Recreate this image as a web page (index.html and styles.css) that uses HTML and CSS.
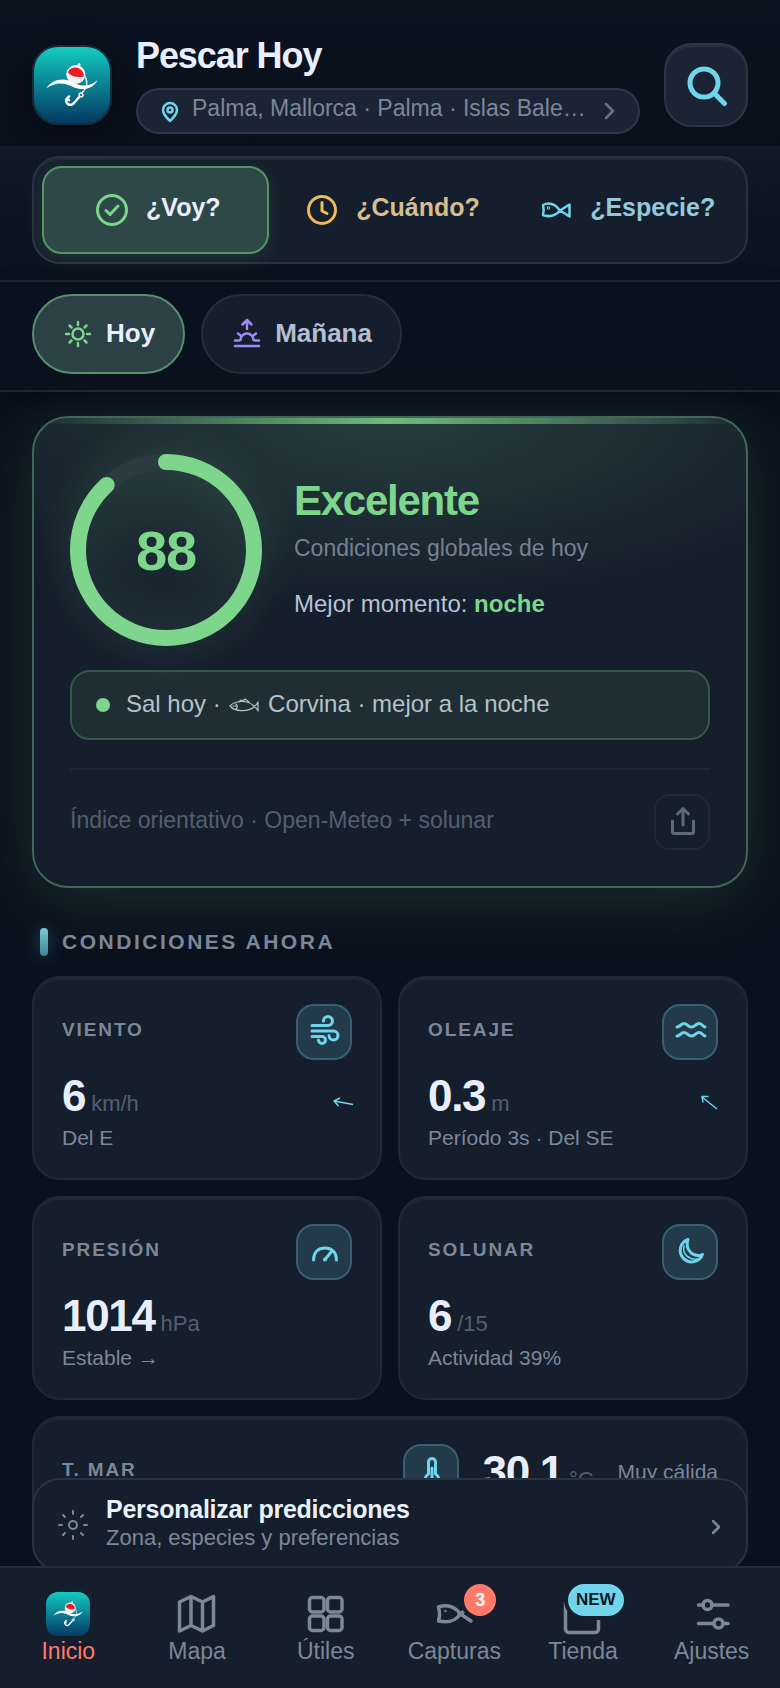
FILE: index.html
```html
<!DOCTYPE html>
<html lang="es">
<head>
    <meta charset="UTF-8">
    <meta name="viewport" content="width=device-width, initial-scale=1.0">
    <title>Pescar Hoy</title>
    <link rel="stylesheet" href="styles.css">
</head>
<body>
    <!-- Shared app logo -->
    <svg class="defs" width="0" height="0" aria-hidden="true">
        <defs>
            <linearGradient id="sea" x1="0" y1="0" x2="0" y2="1">
                <stop offset="0" stop-color="#14ccc0"/>
                <stop offset="0.5" stop-color="#0b8093"/>
                <stop offset="1" stop-color="#053a63"/>
            </linearGradient>
        </defs>
        <symbol id="logo" viewBox="0 0 80 80">
            <rect width="80" height="80" fill="url(#sea)"/>
            <path d="M47.500 18.500l-1 5" stroke="#f4f4f6" stroke-width="3" stroke-linecap="round"/>
            <circle cx="44" cy="29" r="10" fill="#f1f2f5"/>
            <path d="M35.500 26.500a9 9 0 0 1 17 4.500c-6 1.500-13 .5-17-4.500z" fill="#ee1c25"/>
            <path d="M53 30c4 6 4 12-3 19" fill="none" stroke="#dfe7ee" stroke-width="1.500"/>
            <path d="M13 43.500c6-9 17-12 28-6.500 9 5 17 5 26-2-5 9-15 12-27 6.500-9-4.500-18-4.500-27 2z" fill="#fff"/>
            <circle cx="49.500" cy="50.500" r="2" fill="none" stroke="#fff" stroke-width="1.500"/>
            <path d="M48 52l-6 7c-4 4-9 1-8-4l3-3M34 55l3 1" fill="none" stroke="#fff" stroke-width="2.500" stroke-linecap="round"/>
        </symbol>
    </svg>

    <header class="header">
        <svg class="brand-logo"><use href="#logo"/></svg>
        <div class="brand">
            <h1>Pescar Hoy</h1>
            <button class="location" type="button">
                <svg width="20" height="24" viewBox="0 0 20 24" stroke-width="2.500"><path d="M10 22c-4-4-7-7-7-11a7 7 0 0 1 14 0c0 4-3 7-7 11z"/><circle cx="10" cy="11" r="2.500"/></svg>
                <span class="location-name">Palma, Mallorca · Palma · Islas Baleares, España</span>
                <svg class="chevron" width="16" height="20" viewBox="0 0 16 20" stroke-width="2.500"><path d="M6 3l7 7-7 7"/></svg>
            </button>
        </div>
        <button class="search" type="button" aria-label="Buscar">
            <svg width="80" height="80" viewBox="2 2 80 80" stroke-width="5"><circle cx="40" cy="40" r="14"/><path d="M50.500 50.500l10 10"/></svg>
        </button>
    </header>

    <div class="tabs-bar">
        <div class="tabs">
            <button class="tab active" type="button">
                <svg width="44" height="44" viewBox="0 0 44 44" stroke-width="3"><circle cx="22" cy="22" r="14.500"/><path d="M16 22.500l4 4 8-8.500"/></svg>
                <span>¿Voy?</span>
            </button>
            <button class="tab when" type="button">
                <svg width="44" height="44" viewBox="0 0 44 44" stroke-width="3"><circle cx="22" cy="22" r="13.500"/><path d="M22 14.500v8.500l5 2.500"/></svg>
                <span>¿Cuándo?</span>
            </button>
            <button class="tab species" type="button">
                <svg width="44" height="44" viewBox="0 0 44 44" stroke-width="2.500"><path d="M9 17c7-3.500 12-1 17 5.500-5 6-10 7-17 4.500 1-3.500 1-6.500 0-10zM26 22.500l9.500-6v12z"/><circle cx="14.500" cy="20" r=".5"/></svg>
                <span>¿Especie?</span>
            </button>
        </div>
    </div>

    <div class="days-bar">
        <button class="day active" type="button">
            <svg width="32" height="32" viewBox="0 0 32 32" stroke-width="2.500"><circle cx="16" cy="16" r="5.500"/><path d="M16 4v3M16 25v3M4 16h3M25 16h3M7.500 7.500l2 2M22.500 22.500l2 2M7.500 24.500l2-2M22.500 9.500l2-2"/></svg>
            <span>Hoy</span>
        </button>
        <button class="day" type="button">
            <svg width="32" height="32" viewBox="0 0 32 32" stroke-width="2.500"><path d="M16 11V2.500M11.500 6.500L16 2l4.500 4.500M9.500 22a6.500 6.500 0 0 1 13 0M4 22.500h4M24 22.500h4M4 28h24M7 15.500l2 1.500M25 15.500l-2 1.500"/></svg>
            <span>Mañana</span>
        </button>
    </div>

    <main>
        <section class="score-card">
            <div class="score-top">
                <div class="ring">
                    <svg width="192" height="192" viewBox="0 0 192 192">
                        <circle class="ring-track" cx="96" cy="96" r="88"/>
                        <circle class="ring-value" cx="96" cy="96" r="88" stroke-dasharray="487 553" transform="rotate(-90 96 96)"/>
                    </svg>
                    <span class="ring-number">88</span>
                </div>
                <div class="score-text">
                    <h2>Excelente</h2>
                    <p class="muted">Condiciones globales de hoy</p>
                    <p class="best">Mejor momento: <strong>noche</strong></p>
                </div>
            </div>
            <div class="tip">
                <span class="dot"></span>
                <p>Sal hoy · <svg width="30" height="14" viewBox="0 0 30 14" stroke-width="1.200"><path d="M1 8c5-6 18-6 24 0 1 0 3-2 4-4v9c-1-2-3-4-4-4-6 5-19 5-24-1zM10 4l2-2 2 1 2-2 4 3M4 8h3M7 6c2 2 1 4 0 5"/></svg> Corvina · mejor a la noche</p>
            </div>
            <div class="score-foot">
                <span>Índice orientativo · Open-Meteo + solunar</span>
                <button class="share" type="button" aria-label="Compartir">
                    <svg width="52" height="52" viewBox="2 2 52 52" stroke-width="3"><path d="M29 31V15M23.500 20l5.500-5.500 5.500 5.500M18.500 27v10.500c0 1.500.5 2 2 2h17c1.500 0 2-.5 2-2V27"/></svg>
                </button>
            </div>
        </section>

        <h3 class="section-title">Condiciones ahora</h3>

        <section class="metrics">
            <article class="metric">
                <div class="metric-head">
                    <h4>Viento</h4>
                    <span class="icon"><svg width="52" height="52" viewBox="2 2 52 52"><path d="M16 21.500h16a4.500 4.500 0 1 0-4.500-4.500M16 27h21.500a4.500 4.500 0 1 1-4.500 4.500M16 32.500h10a3.500 3.500 0 1 1-3.500 3.500"/></svg></span>
                </div>
                <div class="metric-value">
                    <b>6</b><small>km/h</small>
                    <svg class="arrow" width="28" height="44" viewBox="0 0 28 44"><path d="M29 30.500L10 27M16 24l-6 3 4.500 5"/></svg>
                </div>
                <p>Del E</p>
            </article>
            <article class="metric">
                <div class="metric-head">
                    <h4>Oleaje</h4>
                    <span class="icon"><svg width="52" height="52" viewBox="2 2 52 52"><path d="M15 23c3 0 4-3.500 7-3.500s4 3.500 7.500 3.500 4.500-3.500 7.500-3.500 3.500 3 6 3.500M15 32c3 0 4-3.500 7-3.500s4 3.500 7.500 3.500 4.500-3.500 7.500-3.500 3.500 3 6 3.500"/></svg></span>
                </div>
                <div class="metric-value">
                    <b>0.3</b><small>m</small>
                    <svg class="arrow" width="28" height="44" viewBox="0 0 28 44"><path d="M27 35L12 23M18.500 22.500H12l1 6"/></svg>
                </div>
                <p>Período 3s · Del SE</p>
            </article>
            <article class="metric">
                <div class="metric-head">
                    <h4>Presión</h4>
                    <span class="icon"><svg width="52" height="52" viewBox="2 2 52 52"><path d="M17.500 36c0-8 5-12 11.500-12s11.500 4 11.500 12M29 35.500l6.500-8"/><circle cx="29" cy="35.500" r=".5"/></svg></span>
                </div>
                <div class="metric-value"><b>1014</b><small>hPa</small></div>
                <p>Estable →</p>
            </article>
            <article class="metric">
                <div class="metric-head">
                    <h4>Solunar</h4>
                    <span class="icon"><svg width="52" height="52" viewBox="2 2 52 52"><path d="M26 15.500a11.500 11.500 0 1 0 14.500 15c-9 4-18-5-14.500-15z"/><path d="M22 22c-2 8 5 14 13 13" stroke-width="1.500"/></svg></span>
                </div>
                <div class="metric-value"><b>6</b><small>/15</small></div>
                <p>Actividad 39%</p>
            </article>
            <article class="metric wide">
                <h4>T. Mar</h4>
                <span class="icon"><svg width="52" height="52" viewBox="2 2 52 52"><path d="M25.500 30V18a3.500 3.500 0 0 1 7 0v12a7 7 0 1 1-7 0zM29 24v12"/></svg></span>
                <div class="metric-value"><b>30.1</b><small>°C</small></div>
                <p>Muy cálida</p>
            </article>
        </section>
    </main>

    <button class="customize" type="button">
        <svg width="32" height="32" viewBox="0 0 32 32" stroke-width="2"><circle cx="15" cy="16" r="4"/><path d="M15 2v3M15 27v3M1 16h3M26 16h3M5 6l2 2M23 24l2 2M5 26l2-2M23 8l2-2"/></svg>
        <span class="customize-text">
            <strong>Personalizar predicciones</strong>
            <span>Zona, especies y preferencias</span>
        </span>
        <svg width="16" height="20" viewBox="0 0 16 20" stroke-width="2.500"><path d="M7 6l6 6-6 6"/></svg>
    </button>

    <nav class="bottom-nav">
        <a class="current" href="#">
            <svg class="nav-logo" width="44" height="44"><use href="#logo"/></svg>
            <span>Inicio</span>
        </a>
        <a href="#">
            <svg width="44" height="44" viewBox="0 0 44 44" stroke-width="3.500"><path d="M4.500 10l11.500-5.500 11.500 5.500L38.500 4.500V33.500L27.500 39 16 33.500 4.500 39zM16 5v28.500M27.500 10v28.500"/></svg>
            <span>Mapa</span>
        </a>
        <a href="#">
            <svg width="44" height="44" viewBox="0 0 44 44" stroke-width="3.500"><rect x="5.500" y="5.500" width="14.500" height="14.500" rx="3"/><rect x="23.500" y="5.500" width="14.500" height="14.500" rx="3"/><rect x="5.500" y="24" width="14.500" height="14.500" rx="3"/><rect x="23.500" y="24" width="14.500" height="14.500" rx="3"/></svg>
            <span>Útiles</span>
        </a>
        <a href="#">
            <svg width="44" height="44" viewBox="0 0 44 44" stroke-width="3.500"><path d="M6.500 15c9-3 16-1 22 7-6 8-13 9-22 7 1.500-5 1.500-9 0-14zM27 21l12 8M27 23l12-9"/><circle cx="13.500" cy="19" r=".5" stroke-width="1.500"/></svg>
            <i class="badge">3</i>
            <span>Capturas</span>
        </a>
        <a href="#">
            <svg width="44" height="44" viewBox="0 0 44 44" stroke-width="3.500"><path d="M10 4L4.500 11v26a3.500 3.500 0 0 0 3.500 3.500h26a3.500 3.500 0 0 0 3.500-3.500V11L32 4zM4.500 11h33"/></svg>
            <i class="badge new">NEW</i>
            <span>Tienda</span>
        </a>
        <a href="#">
            <svg width="44" height="44" viewBox="0 0 44 44" stroke-width="3.500"><circle cx="17.500" cy="13" r="4.500"/><circle cx="28.500" cy="31.500" r="4.500"/><path d="M8.500 13H13M22 13h16M8.500 31.500H24M33 31.500h5"/></svg>
            <span>Ajustes</span>
        </a>
    </nav>
</body>
</html>
```

FILE: styles.css
```css
* { box-sizing: border-box; margin: 0; padding: 0; }
body { background: #0a111e; color: #e8eefc; font-family: "Liberation Sans", Arial, sans-serif; padding-bottom: 120px; }
svg { display: block; flex-shrink: 0; fill: none; stroke: currentColor; stroke-linecap: round; stroke-linejoin: round; }
button { font: inherit; color: inherit; cursor: pointer; }
a { color: inherit; text-decoration: none; }
.defs { position: absolute; }
#logo, .brand-logo, .nav-logo { stroke: none; }

/* header */
.header { display: flex; align-items: center; gap: 24px; padding: 36px 32px 12px; background: linear-gradient(#0b121f, #08101c); border-bottom: 2px solid #151c29; }
.brand-logo { width: 80px; height: 80px; border: 2px solid #1b2a3a; border-radius: 26px; box-shadow: 0 4px 24px rgba(0, 0, 0, 0.4); }
.brand { flex: 1; min-width: 0; }
.brand h1 { font-size: 36px; line-height: 40px; letter-spacing: -0.03em; margin-bottom: 12px; }
.location { display: flex; align-items: center; gap: 12px; width: 100%; height: 46px; padding: 0 22px; border: 2px solid #2c3747; border-radius: 23px; background: #1a2435; color: #70d5ea; }
.location-name { flex: 1; min-width: 0; overflow: hidden; text-overflow: ellipsis; white-space: nowrap; text-align: left; font-size: 23px; line-height: 28px; padding-bottom: 6px; color: #7c8798; }
.chevron { color: #687384; }
.search { width: 84px; height: 84px; border: 2px solid #2b3647; border-radius: 28px; background: #1a2435; color: #70d5ea; box-shadow: inset 0 2px 0 rgba(255, 255, 255, 0.05); }

/* main tabs */
.tabs-bar { padding: 8px 32px 16px; background: linear-gradient(#0f1929, #0a111e); border-bottom: 2px solid #1e2634; }
.tabs { display: grid; grid-template-columns: repeat(3, 1fr); gap: 8px; padding: 8px; border: 2px solid #283241; border-radius: 28px; background: #151e2c; box-shadow: inset 0 2px 0 rgba(255, 255, 255, 0.05); }
.tab { display: flex; align-items: center; justify-content: center; gap: 12px; height: 88px; border: 2px solid transparent; border-radius: 20px; background: none; font-size: 25px; font-weight: bold; }
.tab span { padding-bottom: 6px; }
.tab.active { background: #2e4848; border-color: #559468; box-shadow: 0 4px 20px rgba(125, 214, 140, 0.12); }
.tab.active svg { color: #7bd68b; }
.when { color: #d6bd90; }
.when svg { color: #efb958; }
.species { color: #94c9dc; }
.species svg { color: #70d5ea; }

/* day selector */
.days-bar { position: relative; display: flex; gap: 16px; padding: 12px 32px 16px; background: #0a111e; border-bottom: 2px solid #1e2634; box-shadow: 0 8px 20px rgba(0, 0, 0, 0.3); }
.day { display: flex; align-items: center; gap: 12px; height: 80px; padding: 0 28px; border: 2px solid #242d3b; border-radius: 40px; background: #151e2c; color: #b5bfd2; font-size: 26px; font-weight: bold; }
.day span { line-height: 30px; padding-bottom: 2px; }
.day svg { color: #9b8cf2; }
.day.active { background: #2b4145; border-color: #588e6d; color: #e8eefc; }
.day.active svg { color: #7bd68b; }

main { padding: 24px 32px 0; }

/* global score */
.score-card { position: relative; overflow: hidden; padding: 36px; border: 2px solid #42665a; border-radius: 36px; background: radial-gradient(ellipse 70% 40% at 50% 0, rgba(125, 214, 140, 0.17), transparent), #151e2c; box-shadow: 0 12px 64px rgba(125, 214, 140, 0.14); }
.score-card::before { content: ""; position: absolute; top: 0; left: 0; right: 0; height: 6px; background: linear-gradient(90deg, transparent, #6dba7c, transparent); }
.score-top { display: flex; align-items: center; gap: 32px; }
.ring { position: relative; width: 192px; height: 192px; border-radius: 50%; background: radial-gradient(rgba(125, 214, 140, 0.02), rgba(125, 214, 140, 0.09) 70%); box-shadow: 0 0 48px rgba(125, 214, 140, 0.14); }
.ring circle { stroke-width: 16; }
.ring-track { stroke: #2c3a41; }
.ring-value { stroke: #7dd68c; }
.ring-number { position: absolute; inset: 0; display: flex; align-items: center; justify-content: center; color: #7dd68c; font-size: 56px; font-weight: bold; letter-spacing: -0.02em; }
.score-text { padding-bottom: 4px; }
.score-text h2 { color: #7dd68c; font-size: 42px; line-height: 46px; letter-spacing: -0.03em; margin-bottom: 10px; }
.score-text p { font-size: 24px; line-height: 28px; }
.score-text .muted { color: #768192; font-size: 23px; margin-bottom: 28px; }
.best { color: #b8c2d5; }
.best strong { color: #7dd68c; }
.tip { display: flex; align-items: center; gap: 16px; height: 70px; margin-top: 24px; padding: 0 24px; border: 2px solid #34594b; border-radius: 20px; background: #1f2e35; color: #b5c2c9; font-size: 24px; }
.tip p { padding-bottom: 2px; }
.tip svg { display: inline; vertical-align: 0; margin: 0 2px; }
.dot { width: 14px; height: 14px; border-radius: 50%; background: #7dd68c; }
.score-foot { display: flex; align-items: center; justify-content: space-between; margin-top: 28px; padding-top: 24px; border-top: 2px solid #1e2735; color: #535e70; font-size: 23px; }
.score-foot span { padding-bottom: 4px; }
.share { width: 56px; height: 56px; border: 2px solid #1f2836; border-radius: 16px; background: none; color: #5e697a; }

/* conditions */
.section-title { display: flex; align-items: center; gap: 14px; padding: 0 8px; margin: 40px 0 20px; color: #7c8798; font-size: 21px; line-height: 28px; letter-spacing: 0.12em; text-transform: uppercase; }
.section-title::before { content: ""; width: 8px; height: 28px; border-radius: 4px; background: linear-gradient(#78ccd6, #427f94); box-shadow: 0 0 16px rgba(112, 213, 234, 0.3); }
.metrics { display: grid; grid-template-columns: 1fr 1fr; gap: 16px; }
.metric { padding: 26px 28px 28px; border: 2px solid #1f2836; border-radius: 28px; background: #151e2c; box-shadow: inset 0 2px 0 rgba(255, 255, 255, 0.04); }
.metric-head { display: flex; align-items: center; justify-content: space-between; margin-bottom: 14px; }
.metric h4 { color: #7c8798; font-size: 19px; line-height: 22px; letter-spacing: 0.1em; text-transform: uppercase; padding-bottom: 4px; }
.icon { width: 56px; height: 56px; border: 2px solid #3a606e; border-radius: 18px; background: #233a4b; color: #70d5ea; stroke-width: 3; }
.metric-value { display: flex; align-items: baseline; gap: 6px; line-height: 44px; }
.metric-value b { font-size: 44px; letter-spacing: -0.03em; }
.metric-value small { color: #535e70; font-size: 22px; line-height: 24px; }
.arrow { align-self: center; margin-left: auto; overflow: visible; color: #70d5ea; stroke-width: 1.5; stroke-linecap: butt; }
.metric p { margin-top: 8px; color: #7c8798; font-size: 21px; line-height: 24px; }
.wide { grid-column: 1 / -1; display: flex; align-items: center; gap: 24px; }
.wide h4 { margin-right: auto; }
.wide p { margin-top: 0; }

/* floating shortcut, tucked under the nav */
.customize { position: fixed; left: 32px; right: 32px; bottom: 116px; display: flex; align-items: center; gap: 16px; height: 94px; padding: 0 24px; border: 2px solid #283241; border-radius: 28px; background: #151e2c; color: #7c8798; text-align: left; }
.customize-text { flex: 1; padding-bottom: 4px; }
.customize-text strong { display: block; color: #e8f2fc; font-size: 25px; line-height: 30px; letter-spacing: -0.01em; }
.customize-text span { display: block; font-size: 22px; line-height: 28px; }

/* bottom navigation */
.bottom-nav { position: fixed; left: 0; right: 0; bottom: 0; display: grid; grid-template-columns: repeat(6, 1fr); height: 122px; padding: 24px 4px 0; border-top: 2px solid #242d3b; background: #151e2c; color: #7c8798; }
.bottom-nav a { position: relative; display: flex; flex-direction: column; align-items: center; gap: 2px; }
.bottom-nav span { font-size: 23px; line-height: 26px; }
.bottom-nav .current { color: #ff7a6b; }
.nav-logo { border-radius: 12px; }
.badge { position: absolute; top: -8px; left: 50%; margin-left: 10px; min-width: 32px; height: 32px; border-radius: 16px; background: #ff7a6b; box-shadow: 0 0 0 4px #151e2c; color: #fff; font-size: 18px; font-weight: bold; font-style: normal; line-height: 32px; text-align: center; }
.badge.new { margin-left: -15px; padding: 0 8px; background: #70d5ea; color: #0a1826; font-size: 17px; }
```
